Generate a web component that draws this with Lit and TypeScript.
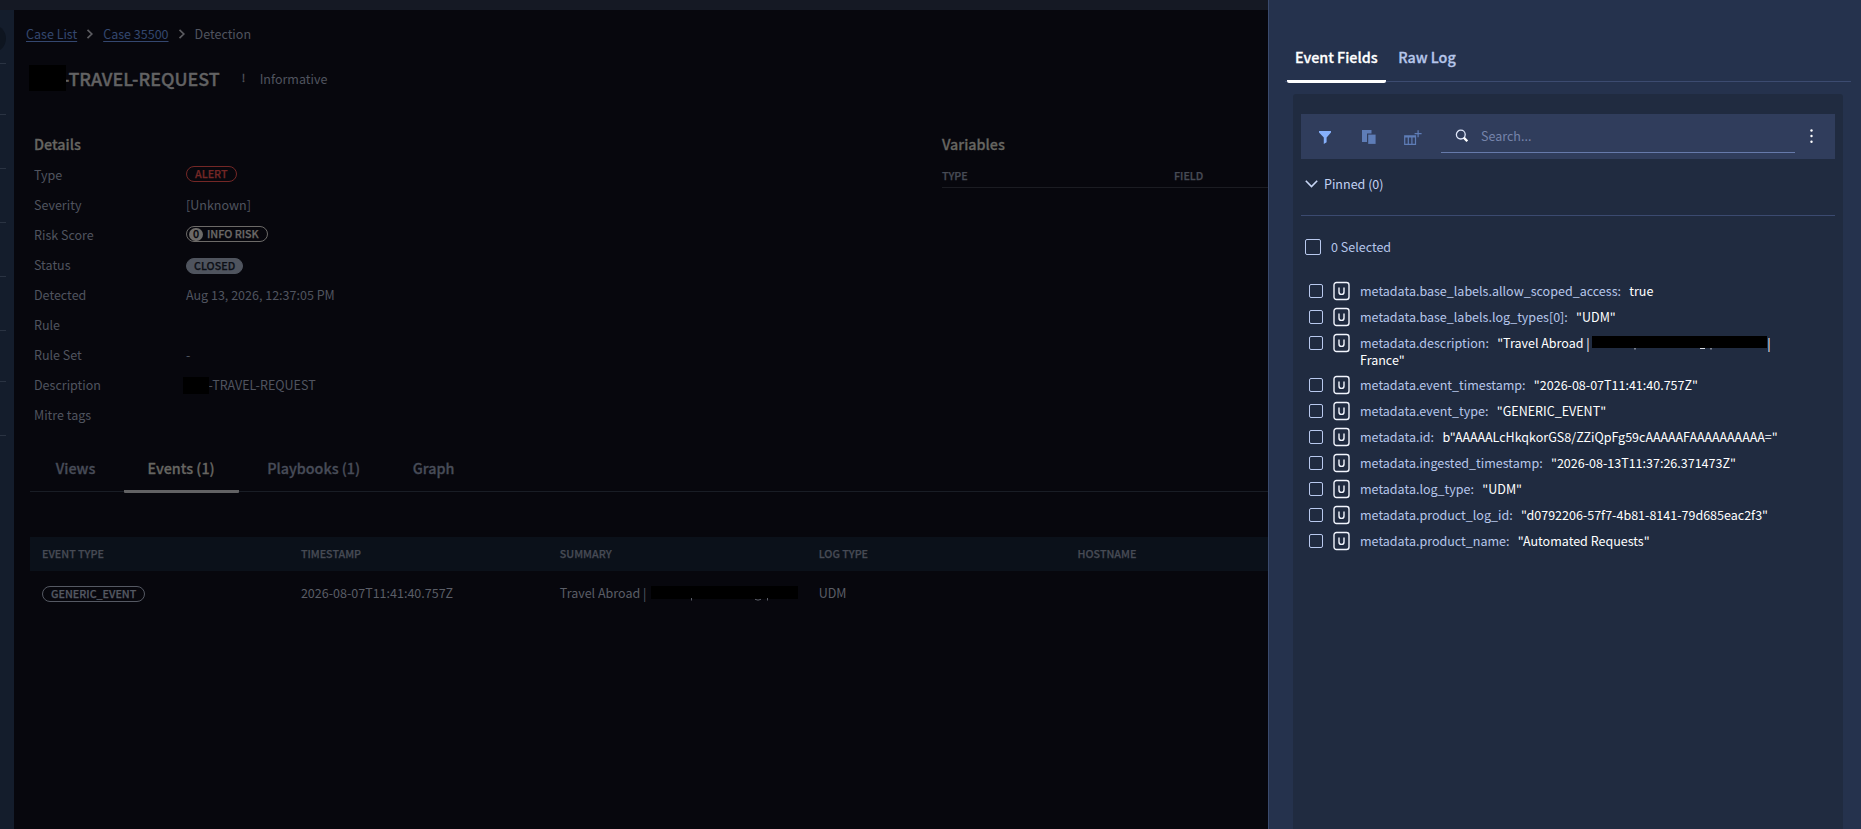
import { LitElement, html, svg, css, nothing } from "lit";
import { customElement } from "lit/decorators.js";
import { classMap } from "lit/directives/class-map.js";

const chevronRight = html`<svg class="sep" width="8" height="12" viewBox="0 0 8 12" fill="none">
  <path d="M1.5 1.8 5.8 6 1.5 10.2" stroke="currentColor" stroke-width="1.7" />
</svg>`;

@customElement("nav-rail")
class NavRail extends LitElement {
  static styles = css`
    :host { display: block; width: 14px; background: #141d2c; overflow: hidden; }
    .knob { margin: 14px 0 0 -24px; width: 30px; height: 29px; border-radius: 50%; background: #0e1520; }
    .line { width: 6px; height: 1px; background: #2a3342; margin-top: 53px; }
    .line.first { margin-top: 10px; }
    .line.near { margin-top: 50px; }
  `;
  render() {
    const kinds = ["first", "near", "", "", "", "", "near", ""];
    return html`<div class="knob"></div>
      ${kinds.map((k) => html`<div class=${classMap({ line: true, first: k === "first", near: k === "near" })}></div>`)}`;
  }
}

@customElement("case-detail")
class CaseDetail extends LitElement {
  static styles = css`
    :host { display: block; flex: 1; min-width: 0; background: #07070d; color: #50545f; }
    .crumbs { display: flex; align-items: center; height: 20px; margin: 14px 0 0 12px; }
    .crumbs a { color: #34476f; text-decoration: underline; text-underline-offset: 2px; text-decoration-thickness: 1px; }
    .crumbs .sep { margin: 0 9px 0 9px; color: #5b5b60; }
    .head { display: flex; align-items: center; margin: 17px 0 0 15px; height: 37px; }
    .mask { background: #000; flex: none; position: relative; }
    .head .mask { width: 37px; height: 26px; margin-top: -4px; z-index: 1; }
    .name { font-size: 17.9px; font-weight: 500; -webkit-text-stroke: 0.35px; color: #626263; margin: -3px 0 0 -3px; line-height: 26px; }
    .bang { font-size: 10.7px; margin: -3px 0 0 22px; width: 6px; color: #56585f; -webkit-text-stroke: 0.3px; }
    .info { margin: -2px 0 0 12px; }
    .cols { display: flex; margin-top: 34px; height: 313px; }
    .details { width: 908px; flex: none; padding-left: 20px; box-sizing: border-box; }
    .vars { flex: 1; margin-left: 0; }
    h2 { font-size: 14.33px; font-weight: 500; -webkit-text-stroke: 0.3px; line-height: 24px; margin: 0; color: #666561; }
    .details h2 { margin-bottom: 4px; }
    .vars h2, .vars .thead { margin-left: 20px; }
    .details { margin-right: 0; }
    .row { display: flex; align-items: center; height: 30px; }
    .row .k { width: 152px; }
    .pill { box-sizing: border-box; display: inline-flex; align-items: center; height: 16px; border-radius: 8px;
      border: 1px solid; padding: 0 8px; font-size: 10.74px; line-height: 14px; font-weight: 500; -webkit-text-stroke: 0.25px; }
    .row .pill { margin-top: -2px; }
    .pill.alert { color: #742726; border-color: #742726; }
    .pill.risk { color: #6c6a68; padding: 0 8px 0 2px; }
    .row .pill.closed { color: #0c0f16; background: #4f545e; border-color: #4f545e; padding: 0 7px; margin-top: 1px; }
    .pill.evt { color: #555963; }
    .zero { width: 14px; height: 13px; border-radius: 7px; background: #6c6a68; color: #07070d; text-align: center; line-height: 12px; margin-right: 4px; }
    .desc { margin-left: -3px; display: flex; align-items: center; }
    .desc .mask { width: 26px; height: 17px; margin-right: -0.5px; }
    .th { font-size: 10.74px; font-weight: 500; -webkit-text-stroke: 0.25px; color: #474b55; }
    .vars .thead { display: flex; height: 22px; line-height: 22px; margin-top: 9px; border-bottom: 1px solid #1b1c22; }
    .vars .thead span { width: 232px; }
    .tabs { display: flex; margin-left: 16px; height: 46px; border-bottom: 1px solid #191d25; font-size: 14.33px; font-weight: 500; -webkit-text-stroke: 0.3px; color: #474c58; }
    .tabs div { padding: 0 26.3px; line-height: 46px; height: 48px; box-sizing: border-box; }
    .tabs div:first-child { padding: 0 28.5px 0 25.8px; }
    .tabs div.on { padding: 0 24px 0 23.7px; margin-right: 2.2px; color: #666561; border-bottom: 3px solid #626264; border-radius: 1px; }
    .grid { margin: 45px 0 0 16px; }
    .line { display: grid; grid-template-columns: repeat(5, 258.9px); padding-left: 12px; align-items: center; overflow: hidden; }
    .line.h { background: #0b111a; height: 34px; }
    .line.b { height: 44px; color: #5a5d66; }
    .sum { display: flex; align-items: center; }
    .sum .mask { width: 147px; height: 13px; margin: -2px 0 0 4.5px; }
    .tails { position: absolute; left: 0; top: 12px; }
  `;
  private row(k: string, v: unknown = nothing) {
    return html`<div class="row"><span class="k">${k}</span>${v}</div>`;
  }
  render() {
    return html`
      <div class="crumbs"><a>Case List</a>${chevronRight}<a>Case 35500</a>${chevronRight}<span>Detection</span></div>
      <div class="head"><span class="mask"></span><span class="name">-TRAVEL-REQUEST</span><span class="bang">!</span><span class="info">Informative</span></div>
      <div class="cols">
        <div class="details">
          <h2>Details</h2>
          ${this.row("Type", html`<span class="pill alert">ALERT</span>`)}
          ${this.row("Severity", "[Unknown]")}
          ${this.row("Risk Score", html`<span class="pill risk"><span class="zero">0</span>INFO RISK</span>`)}
          ${this.row("Status", html`<span class="pill closed">CLOSED</span>`)}
          ${this.row("Detected", "Aug 13, 2026, 12:37:05 PM")}
          ${this.row("Rule")}
          ${this.row("Rule Set", "-")}
          ${this.row("Description", html`<span class="desc"><span class="mask"></span>-TRAVEL-REQUEST</span>`)}
          ${this.row("Mitre tags")}
        </div>
        <div class="vars">
          <h2>Variables</h2>
          <div class="thead th"><span>TYPE</span><span>FIELD</span></div>
        </div>
      </div>
      <div class="tabs"><div>Views</div><div class="on">Events (1)</div><div>Playbooks (1)</div><div>Graph</div></div>
      <div class="grid">
        <div class="line h th"><span>EVENT TYPE</span><span>TIMESTAMP</span><span>SUMMARY</span><span>LOG TYPE</span><span>HOSTNAME</span></div>
        <div class="line b">
          <span><span class="pill evt">GENERIC_EVENT</span></span><span>2026-08-07T11:41:40.757Z</span>
          <span class="sum">Travel Abroad |<span class="mask"><svg class="tails" width="147" height="4" viewBox="0 0 147 4" fill="none" stroke="#5a5d66"><path d="M40.500 0V2.500M104 1.300Q107 3 110 1.300M116.500 0V2.500" /></svg></span></span><span>UDM</span>
        </div>
      </div>`;
  }
}

type Field = { key: string; value: string; masked?: boolean; tail?: string };
const fields: Field[] = [
  { key: "metadata.base_labels.allow_scoped_access:", value: "true" },
  { key: "metadata.base_labels.log_types[0]:", value: '"UDM"' },
  { key: "metadata.description:", value: '"Travel Abroad |', masked: true, tail: 'France"' },
  { key: "metadata.event_timestamp:", value: '"2026-08-07T11:41:40.757Z"' },
  { key: "metadata.event_type:", value: '"GENERIC_EVENT"' },
  { key: "metadata.id:", value: 'b"AAAAALcHkqkorGS8/ZZiQpFg59cAAAAAFAAAAAAAAAA="' },
  { key: "metadata.ingested_timestamp:", value: '"2026-08-13T11:37:26.371473Z"' },
  { key: "metadata.log_type:", value: '"UDM"' },
  { key: "metadata.product_log_id:", value: '"d0792206-57f7-4b81-8141-79d685eac2f3"' },
  { key: "metadata.product_name:", value: '"Automated Requests"' },
];

@customElement("event-panel")
class EventPanel extends LitElement {
  static styles = css`
    :host { display: flex; flex-direction: column; box-sizing: border-box; width: 593px; background: #25324d;
      border-left: 1px solid #3a4a6d; color: #b6c6ea; }
    .tabs { display: flex; margin: 36px 10px 0 16px; height: 45px; border-bottom: 1px solid #3c4b70; font-size: 14.33px; font-weight: 500; -webkit-text-stroke: 0.3px; padding-left: 2px; }
    .tabs div { padding: 0 8px; margin-right: 4.5px; height: 47px; line-height: 42px; box-sizing: border-box; }
    .tabs .on { color: #fff; border-bottom: 3px solid #fff; border-radius: 2px; }
    .body { flex: 1; margin: 12px 18px 0 24px; padding: 20px 8px 0; background: #202b40; border-radius: 3px 3px 0 0; }
    .bar { display: flex; height: 45px; background: #303d5c; }
    .bar svg { flex: none; display: block; }
    .funnel { margin: 17px 0 0 18px; }
    .copy { margin: 16px 0 0 31px; }
    .colsadd { margin: 16px 0 0 28px; }
    .search { display: flex; align-items: center; width: 354px; height: 38px; box-sizing: content-box; margin-left: 19px; border-bottom: 1px solid #667aab; color: #7684ab; }
    .search svg { margin: 5px 12px 0 14px; }
    .search span { margin-top: 6px; }
    .dots { margin: 15px 0 0 14.500px; }
    .pinned { display: flex; align-items: center; height: 24px; margin: 13px 0 19px 4px; color: #c3d2f3; }
    .pinned svg { margin-right: 6px; }
    .rule { height: 1px; background: #3b4a70; }
    .sel { display: flex; align-items: center; height: 24px; margin: 19px 0 23px 4px; }
    .box { box-sizing: border-box; border: 1px solid #b9c9ee; border-radius: 2px; width: 14px; height: 14px; flex: none; }
    .sel .box { width: 16px; height: 16px; margin-right: 10px; }
    .f { display: flex; margin: 0 0 8px 8px; line-height: 18px; }
    .f .box { margin: 2px 10px 0 0; }
    .f svg.u { flex: none; margin: -1px 10px -1px 0; display: block; height: 20px; }
    .v { color: #fff; margin-left: 8.3px; }
    .first { display: flex; }
    .mask { background: #000; width: 175px; height: 12px; margin: 2px 0 0 2.500px; position: relative; }
    .tails { position: absolute; left: 0; top: 12px; }
    .tail { color: #fff; line-height: 16px; }
    .first .tail { line-height: 18px; }
  `;
  render() {
    return html`
      <div class="tabs"><div class="on">Event Fields</div><div>Raw Log</div></div>
      <div class="body">
        <div class="bar">
          <svg class="funnel" width="12" height="14" viewBox="0 0 12 14"><path d="M0 0h12v1.600L7.600 6.500V11.200L4.800 13V6.500L0 1.600Z" fill="#86b0fb" /></svg>
          <svg class="copy" width="14" height="15" viewBox="0 0 14 15" fill="#5e7db7"><path d="M0 0H9.500V3.400H5V12H0Z" /><path d="M6.200 4.600H13.600V13.900H6.200Z" /></svg>
          <svg class="colsadd" width="18" height="16" viewBox="0 0 18 16" fill="none" stroke="#5e7db7" stroke-width="1.200"><path d="M.7 5.800H11.500V14.300H.7ZM.7 7H11.500M4.300 7V14.300M7.900 7V14.300M14.100.2V7.200M10.600 3.700H17.600" /></svg>
          <div class="search">
            <svg width="14" height="14" viewBox="0 0 14 14" fill="none"><circle cx="5.800" cy="5.600" r="4.400" stroke="#dfe7fa" stroke-width="1.300" /><path d="M8.800 8.600 12.300 12.300" stroke="#fff" stroke-width="2.300" /></svg><span>Search...</span>
          </div>
          <svg class="dots" width="3" height="16" viewBox="0 0 3 16" fill="#fff">${[1.5, 7, 12.7].map((y) => svg`<circle cx="1.500" cy=${y} r="1.200" />`)}</svg>
        </div>
        <div class="pinned"><svg width="13" height="8" viewBox="0 0 13 8" fill="none"><path d="M.8.8 6.500 6.600 12.200.8" stroke="#c8d6f5" stroke-width="1.600" /></svg>Pinned (0)</div>
        <div class="rule"></div>
        <div class="sel"><span class="box"></span>0 Selected</div>
        ${fields.map((f) => html`<div class="f"><span class="box"></span>
          <svg class="u" width="17" height="20" viewBox="0 0 17 20" fill="none" stroke="#f2f5fd"><rect x="1" y="1.500" width="15" height="17" rx="2.500" stroke-width="1.400" /><path d="M6 6.400V10.900A2.500 2.500 0 0 0 11 10.900V6.400" stroke-width="1.400" /></svg>
          <div><div class="first"><span>${f.key}</span><span class="v">${f.value}</span>${f.masked ? html`<span class="mask"><svg class="tails" width="175" height="3" viewBox="0 0 175 3" fill="none" stroke="#d5d9e2"><path d="M43 0V1.500M108 .5H113M119 0V1.500" /></svg></span><span class="tail">|</span>` : nothing}</div>
          ${f.tail ? html`<div class="tail">${f.tail}</div>` : nothing}</div></div>`)}
      </div>`;
  }
}

@customElement("app-root")
class AppRoot extends LitElement {
  static styles = css`
    :host { display: flex; height: 100vh; overflow: hidden; background: #07070d;
      font: 12.53px/20px "Noto Sans CJK SC", "Noto Sans", sans-serif; white-space: nowrap; }
    .left { flex: 1; min-width: 0; display: flex; flex-direction: column; overflow: hidden; }
    .top { height: 10px; background: #151924; flex: none; }
    .main { flex: 1; display: flex; min-height: 0; overflow: hidden; }
    event-panel { flex: none; }
  `;
  render() {
    return html`<div class="left"><div class="top"></div><div class="main"><nav-rail></nav-rail><case-detail></case-detail></div></div>
      <event-panel></event-panel>`;
  }
}
